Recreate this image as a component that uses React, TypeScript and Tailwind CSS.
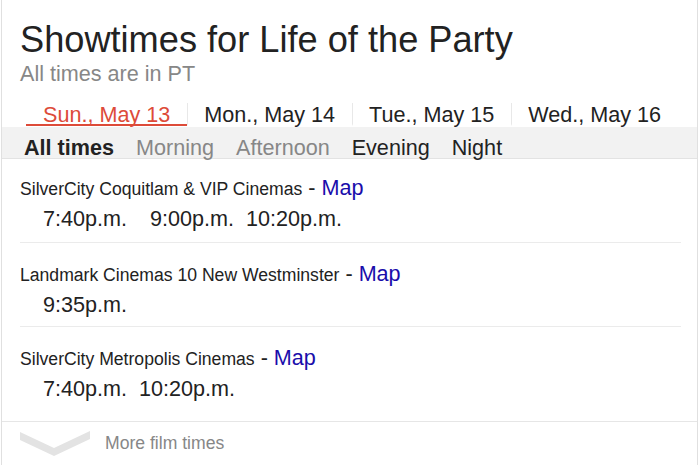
import React from 'react'

const dates = ['Sun., May 13', 'Mon., May 14', 'Tue., May 15', 'Wed., May 16']
const filters = ['All times', 'Morning', 'Afternoon', 'Evening', 'Night']

interface Cinema {
  name: string
  times: { t: string; gap: string }[]
}

const cinemas: Cinema[] = [
  {
    name: 'SilverCity Coquitlam & VIP Cinemas',
    times: [
      { t: '7:40p.m.', gap: 'mr-[23px]' },
      { t: '9:00p.m.', gap: 'mr-[12px]' },
      { t: '10:20p.m.', gap: '' }
    ]
  },
  {
    name: 'Landmark Cinemas 10 New Westminster',
    times: [{ t: '9:35p.m.', gap: '' }]
  },
  {
    name: 'SilverCity Metropolis Cinemas',
    times: [
      { t: '7:40p.m.', gap: 'mr-[12px]' },
      { t: '10:20p.m.', gap: '' }
    ]
  }
]

const entryClass = [
  'ml-[18px] mr-[16px] pt-[18px] pb-[13px] border-b border-[#ebebeb]',
  'ml-[18px] mr-[16px] pt-[20px] pb-[11px] border-b border-[#ebebeb]',
  'ml-[18px] mr-[16px] pt-[20px] pb-[21px]'
]

export default function App() {
  return (
    <div className="w-[699px] h-[465px] overflow-hidden bg-white pl-px font-['Liberation_Sans',Arial,sans-serif] text-[#222]">
      <div className="w-[697px] h-full border-x border-[#e0e0e0] flex flex-col">
        {/* header */}
        <div className="pt-[20px] pl-[18px]">
          <h1 className="text-[36.2px] leading-[40px] font-normal">Showtimes for Life of the Party</h1>
          <div className="text-[21.6px] leading-[28px] text-[#878787]">All times are in PT</div>
        </div>

        {/* date tabs */}
        <div className="flex ml-[24px] mt-[15px]">
          {dates.map((d, i) => (
            <div
              key={d}
              className={
                i === 0
                  ? 'pl-[17px] pr-[17px] pt-[2px] text-[21.6px] leading-[19px] border-b-2 border-[#dd4b39] text-[#dd4b39]'
                  : 'pl-[16px] pr-[17px] pt-[2px] text-[21.6px] leading-[19px] border-b-2 border-b-transparent border-l border-l-[#e8e8e8]'
              }
            >
              {d}
            </div>
          ))}
        </div>

        {/* time of day filters */}
        <div className="mt-px h-[32px] bg-[#f2f2f2] border-b border-[#e3e3e3] flex gap-[22px] pl-[22px] pt-[10px] text-[21.6px] leading-[22px]">
          {filters.map((f, i) => (
            <span
              key={f}
              className={
                i === 0 ? 'font-bold text-[#222]' : i < 3 ? 'text-[#878787]' : 'text-[#222]'
              }
            >
              {f}
            </span>
          ))}
        </div>

        {/* cinemas */}
        {cinemas.map((c, i) => (
          <div key={c.name} className={entryClass[i]}>
            <div className="flex items-baseline">
              <span className="text-[17.6px] leading-none">{c.name}</span>
              <span className="text-[21.6px] leading-none whitespace-pre">
                {' - '}
                <a href="#" className="text-[#1a0dab]">Map</a>
              </span>
            </div>
            <div className="mt-[9px] pl-[23px] flex text-[21.6px] leading-none">
              {c.times.map((t) => (
                <span key={t.t} className={t.gap}>{t.t}</span>
              ))}
            </div>
          </div>
        ))}

        {/* footer */}
        <div className="border-t border-[#e6e6e6] flex items-start pl-[17px] pt-[9px]">
          <svg width="72" height="26" viewBox="0 0 72 26" className="shrink-0">
            <polygon points="1,1 35,17 71,0 71,8 35,25 1,9" fill="#e3e3e3" />
          </svg>
          <span className="ml-[14px] mt-[4px] text-[17.6px] leading-none text-[#878787]">More film times</span>
        </div>
      </div>
    </div>
  )
}
